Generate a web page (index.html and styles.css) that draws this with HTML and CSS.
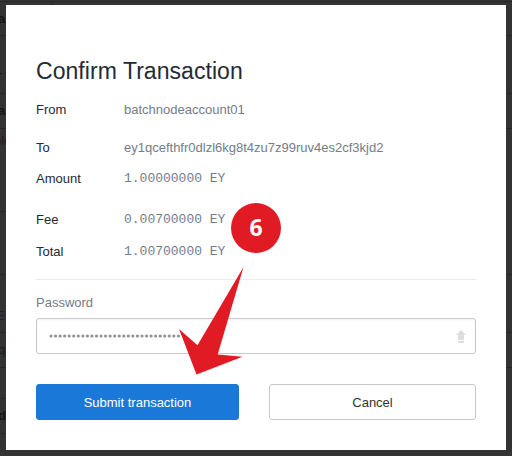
FILE: index.html
```html
<!DOCTYPE html>
<html lang="en">
<head>
<meta charset="utf-8">
<title>Confirm Transaction</title>
<link rel="stylesheet" href="styles.css">
</head>
<body>
<div class="page" aria-hidden="true">
  <div class="line l1"><i></i></div>
  <div class="line l2"><span class="strong">as</span></div>
  <div class="line l3"><span>-</span></div>
  <div class="line l4"><span class="strong">as</span></div>
  <div class="line l5 left"><span class="link">ole</span></div>
  <div class="line l6"></div>
  <div class="line l7"><span class="blue">ES</span></div>
  <div class="line l8"><span class="teal">qc</span></div>
  <div class="line l9 left"></div>
  <div class="line l10 left"><span class="strong">d</span></div>
</div>
<main class="modal">
  <h1>Confirm Transaction</h1>
  <dl class="details">
    <dt>From</dt><dd class="name">batchnodeaccount01</dd>
    <dt>To</dt><dd>ey1qcefthfr0dlzl6kg8t4zu7z99ruv4es2cf3kjd2</dd>
    <dt>Amount</dt><dd class="mono">1.00000000 EY</dd>
    <dt>Fee</dt><dd class="mono">0.00700000 EY</dd>
    <dt>Total</dt><dd class="mono">1.00700000 EY</dd>
  </dl>
  <form class="form">
    <label class="label">Password</label>
    <div class="field">
      <svg class="dots" width="133" height="6"><path d="M2 3H133"/></svg>
      <svg class="up" width="10" height="13" viewBox="0 0 10 13"><path d="M5 0L10 5H8V10H2V5H0ZM2 11H8V13H2Z"/></svg>
    </div>
    <div class="actions">
      <button type="button" class="btn primary">Submit transaction</button>
      <button type="button" class="btn">Cancel</button>
    </div>
  </form>
</main>
<div class="badge">6</div>
<svg class="arrow" width="65" height="110" viewBox="0 0 65 110"><path d="M64.5 0L38.7 87.5L63.5 89.7L17.5 107.5L0 62L18.5 78.3Z"/></svg>
</body>
</html>
```
FILE: styles.css
```css
* { box-sizing: border-box; }
body {
  margin: 0;
  width: 512px;
  height: 456px;
  overflow: hidden;
  position: relative;
  background: #333;
  font: 13px/16px "Liberation Sans", Arial, sans-serif;
  color: #242a38;
}
.page { display: flex; flex-direction: column; color: #151515; font-size: 13px; }
.line { display: flex; align-items: center; border-bottom: 1px solid #282828; overflow: hidden; }
.line span { margin-left: -2px; }
.strong { font-weight: 700; }
.left { width: 100px; }
.l1 { height: 2px; overflow: visible; }
.l1 i { width: 1px; height: 6px; margin: 6px 0 0 51px; background: #272727; flex: none; }
.l2 { height: 34px; }
.l3 { height: 58px; padding-top: 16px; }
.l4 { height: 35px; }
.l5 { height: 83px; align-items: flex-start; padding-top: 4px; }
.line .link { margin-left: -6px; }
.l6 { height: 63px; }
.l7 { height: 58px; padding-top: 25px; }
.line .blue { margin-left: -4px; }
.l8 { height: 35px; }
.l9 { height: 31px; }
.l10 { height: 35px; }
.link { color: #241a18; }
.blue { color: #1b2034; }
.teal { color: #15202a; }
.modal {
  position: absolute;
  left: 6px;
  top: 5px;
  width: 500px;
  height: 445px;
  padding: 52px 30px 30px;
  background: #fff;
}
h1 { margin: 0; font-size: 23px; line-height: 28px; font-weight: 400; letter-spacing: 0.05px; white-space: nowrap; }
.details {
  display: grid;
  grid-template-columns: 88px 1fr;
  grid-template-rows: 38px 31px 41px 32px 27px;
  margin: 17px 0 0;
  padding-bottom: 8px;
  height: 178px;
  border-bottom: 1px solid #ebebeb;
}
dt { white-space: nowrap; }
dd { margin: 0; color: #757b8b; white-space: nowrap; }
.mono { font-family: "Liberation Mono", monospace; }
.form { display: flex; flex-direction: column; }
.label { margin-top: 15px; color: #757b8b; }
.field {
  display: flex;
  align-items: center;
  justify-content: space-between;
  height: 36px;
  margin-top: 7px;
  padding: 0 9px 0 12px;
  border: 1px solid #c8c8c8;
  border-radius: 3px;
  box-shadow: inset 0 1px 2px #0000000d;
}
.dots path { fill: none; stroke: #929292; stroke-width: 3.2; stroke-linecap: round; stroke-dasharray: 0 4.55; }
.up { fill: #dedede; }
.actions { display: grid; grid-template-columns: 203px 207px; gap: 30px; margin-top: 30px; }
.btn {
  height: 36px;
  padding: 2px 0 0;
  border: 1px solid #c8c8c8;
  border-radius: 3px;
  background: #fff;
  color: #333;
  font: inherit;
}
.primary { background: #1a78d8; border-color: #1a78d8; color: #fff; }
.badge {
  position: absolute;
  left: 231px;
  top: 203px;
  width: 50px;
  height: 50px;
  border-radius: 50%;
  background: #e11b24;
  color: #fff;
  font: 700 23px/49px "Open Sans", sans-serif;
  text-align: center;
}
.arrow { position: absolute; left: 179px; top: 267px; fill: #e11b24; }
```
